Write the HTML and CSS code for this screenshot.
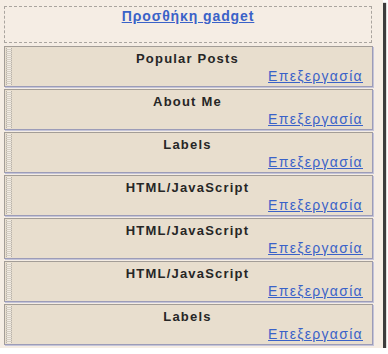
FILE: index.html
```html
<!DOCTYPE html>
<html lang="el">
  <head>
    <meta charset="utf-8" />
    <title>Διάταξη σελίδας</title>
    <link rel="stylesheet" href="styles.css">
  </head>
  <body>
    <div class="frame">
      <div class="add_box">
        <a href="#">Προσθήκη gadget</a>
      </div>
      <div class="widget">
        <div class="grip"></div>
        <div class="body">
          <strong>Popular Posts</strong>
          <a href="#" class="edit">Επεξεργασία</a>
        </div>
      </div>
      <div class="widget">
        <div class="grip"></div>
        <div class="body">
          <strong>About Me</strong>
          <a href="#" class="edit">Επεξεργασία</a>
        </div>
      </div>
      <div class="widget">
        <div class="grip"></div>
        <div class="body">
          <strong>Labels</strong>
          <a href="#" class="edit">Επεξεργασία</a>
        </div>
      </div>
      <div class="widget">
        <div class="grip"></div>
        <div class="body">
          <strong>HTML/JavaScript</strong>
          <a href="#" class="edit">Επεξεργασία</a>
        </div>
      </div>
      <div class="widget">
        <div class="grip"></div>
        <div class="body">
          <strong>HTML/JavaScript</strong>
          <a href="#" class="edit">Επεξεργασία</a>
        </div>
      </div>
      <div class="widget">
        <div class="grip"></div>
        <div class="body">
          <strong>HTML/JavaScript</strong>
          <a href="#" class="edit">Επεξεργασία</a>
        </div>
      </div>
      <div class="widget">
        <div class="grip"></div>
        <div class="body">
          <strong>Labels</strong>
          <a href="#" class="edit">Επεξεργασία</a>
        </div>
      </div>
    </div>
  </body>
</html>
```
FILE: styles.css
```css
* {
  margin: 0;
  padding: 0;
  box-sizing: border-box;
}
body {
  background: #fff;
  font-family: "Liberation Sans", Arial, sans-serif;
  font-size: 13px;
}
.frame {
  width: 383px;
  height: 348px;
  background: #f5ede4;
  padding: 6px 0 0 4px;
  box-shadow: 3px 3px 1px #3c3c3c;
}
.add_box {
  width: 368px;
  height: 37px;
  border: 1px dashed #aaa59f;
  text-align: center;
  padding-top: 1px;
}
.add_box a {
  color: #3a62c8;
  font-size: 14px;
  font-weight: bold;
  letter-spacing: 0.9px;
}
.widget {
  display: flex;
  width: 369px;
  height: 41px;
  margin-top: 2px;
  background: #e8dece;
  border: 1px solid #a39d97;
  border-right-color: #9c9cb8;
  border-bottom-color: #9c9cb8;
  box-shadow: 1px 1px 0 #c4c4d8;
}
.add_box + .widget {
  margin-top: 3px;
}
.grip {
  width: 6px;
  margin: 1px 0 1px 1px;
  border-left: 1px dotted #b9b2a8;
  border-right: 1px dotted #b9b2a8;
  background: repeating-linear-gradient(#f2ece4 0 1px, #d6cfc4 1px 2px);
}
.body {
  flex: 1;
  display: flex;
  flex-direction: column;
  padding: 4px 9px 0 0;
}
.body strong {
  color: #262626;
  text-align: center;
  letter-spacing: 1.2px;
  line-height: 16px;
}
.edit {
  align-self: flex-end;
  color: #3a62c8;
  font-size: 14px;
  letter-spacing: 1.3px;
  line-height: 17px;
  margin-top: 1px;
}
```
